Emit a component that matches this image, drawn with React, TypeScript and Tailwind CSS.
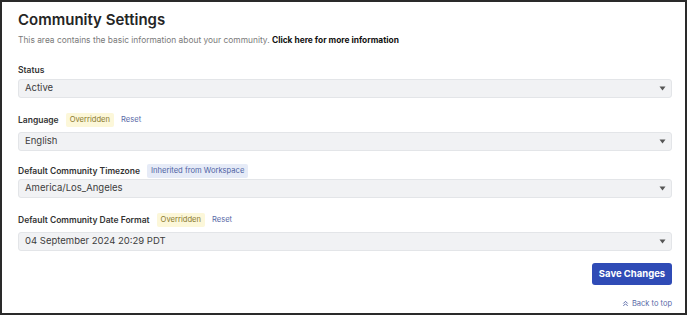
import React from "react";

function Caret() {
  return (
    <svg width="7" height="5" viewBox="0 0 7 5" className="shrink-0">
      <path d="M0.5 0.5 L6.5 0.5 L3.5 4.5 Z" fill="#555" />
    </svg>
  );
}

function Select({ value }: { value: string }) {
  return (
    <div className="flex h-[19px] w-[654px] items-center justify-between rounded-[3px] border border-[#e3e5e8] bg-[#f1f2f4] pl-[6px] pr-[5px] text-[9.5px] text-[#3d3d3d]">
      <span>{value}</span>
      <Caret />
    </div>
  );
}

function Overridden() {
  return (
    <span className="flex h-[14px] items-center rounded-[2px] bg-[#fcf7d9] px-[4px] text-[7.6px] font-normal text-[#8a7a2e]">
      Overridden
    </span>
  );
}

function Reset() {
  return <span className="text-[7.6px] font-normal text-[#5a6aa8]">Reset</span>;
}

export default function App() {
  return (
    <div
      className="box-border h-[315px] w-[687px] border-2 border-[#2a2a2a] bg-white"
      style={{ fontFamily: "Inter, 'Noto Sans', sans-serif" }}
    >
      <div className="pl-[16px] pt-[7px]">
        <h1 className="text-[15px] font-semibold leading-[21px] text-[#252525]">Community Settings</h1>
        <p className="mt-[4px] text-[8.4px] leading-[12px] text-[#7a7a7a]">
          This area contains the basic information about your community.{" "}
          <span className="font-bold text-[#111]">Click here for more information</span>
        </p>

        <div className="mt-[17px] flex h-[14px] items-center text-[8.5px] font-semibold text-[#333]">Status</div>
        <div className="mt-[2px]">
          <Select value="Active" />
        </div>

        <div className="mt-[15px] flex h-[14px] items-center gap-[7px] text-[8.5px] font-semibold text-[#333]">
          <span>Language</span>
          <Overridden />
          <Reset />
        </div>
        <div className="mt-[5px]">
          <Select value="English" />
        </div>

        <div className="mt-[13px] flex h-[14px] items-center gap-[7px] text-[8.5px] font-semibold text-[#333]">
          <span>Default Community Timezone</span>
          <span className="flex h-[14px] items-center rounded-[2px] bg-[#e6ebf7] px-[4px] text-[7.6px] font-normal text-[#4f63a4]">
            Inherited from Workspace
          </span>
        </div>
        <div className="mt-[1px]">
          <Select value="America/Los_Angeles" />
        </div>

        <div className="mt-[15px] flex h-[14px] items-center gap-[7px] text-[8.5px] font-semibold text-[#333]">
          <span>Default Community Date Format</span>
          <Overridden />
          <Reset />
        </div>
        <div className="mt-[5px]">
          <Select value="04 September 2024 20:29 PDT" />
        </div>

        <div className="mt-[12px] flex w-[654px] justify-end">
          <button className="h-[22px] w-[80px] rounded-[3px] bg-[#2f4bb6] text-[9.5px] font-bold text-white">
            Save Changes
          </button>
        </div>

        <div className="mt-[13px] flex w-[654px] items-center justify-end gap-[3px] text-[7.5px] text-[#5a6aa8]">
          <svg width="7" height="7" viewBox="0 0 8 8">
            <path d="M1.5 4 L4 1.5 L6.5 4 M1.5 6.8 L4 4.3 L6.5 6.8" fill="none" stroke="#5a6aa8" strokeWidth="1.1" />
          </svg>
          <span>Back to top</span>
        </div>
      </div>
    </div>
  );
}
